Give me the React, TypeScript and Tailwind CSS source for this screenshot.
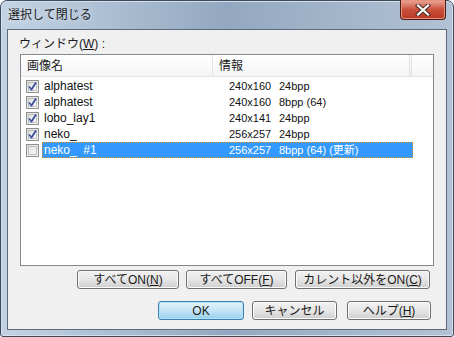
import React from "react";

const font = { fontFamily: '"Liberation Sans", "Noto Sans CJK JP", sans-serif' };

function Check({ checked }: { checked: boolean }) {
  return (
    <div className="w-[13px] h-[13px] border border-[#8e8f8f] bg-gradient-to-br from-[#dcdcdc] to-[#fbfbfb] flex items-center justify-center shrink-0">
      <div className="w-[9px] h-[9px] border border-[#c0c0c0] bg-gradient-to-br from-[#e2e2e2] to-[#f8f8f8] relative">
        {checked && (
          <svg width="11" height="11" viewBox="0 0 11 11" className="absolute left-[-2px] top-[-2px]">
            <path d="M2 5.5 L4.5 8.5 L9 1.5" fill="none" stroke="#3b4fa3" strokeWidth="1.8" strokeLinejoin="round" />
          </svg>
        )}
      </div>
    </div>
  );
}

function Btn({ w, children, def }: { w: string; children: React.ReactNode; def?: boolean }) {
  return (
    <div
      className={
        "h-[19px] rounded-[3px] border flex items-center justify-center text-[12px] leading-none text-[#1a1a1a] " +
        w +
        (def
          ? " border-[#3c7fb1] bg-gradient-to-b from-[#e5f4fc] via-[#c4e5f6] to-[#98d1ef] shadow-[inset_0_0_0_1px_#aee3f9]"
          : " border-[#707070] bg-gradient-to-b from-[#f2f2f2] via-[#e6e6e6] to-[#cfcfcf] shadow-[inset_0_0_0_1px_#fcfcfc]")
      }
    >
      {children}
    </div>
  );
}

const rows = [
  { name: "alphatest", size: "240x160", bpp: "24bpp", on: true },
  { name: "alphatest", size: "240x160", bpp: "8bpp (64)", on: true },
  { name: "lobo_lay1", size: "240x141", bpp: "24bpp", on: true },
  { name: "neko_", size: "256x257", bpp: "24bpp", on: true },
  { name: "neko_\u00a0\u00a0#1", size: "256x257", bpp: "8bpp (64)\u00a0(更新)", on: false, sel: true },
];

export default function App() {
  return (
    <div style={font} className="w-[454px] h-[337px] bg-white">
      <div className="w-[454px] h-[337px] rounded-t-[7px] rounded-b-[3px] border border-[#3c4a5c] bg-gradient-to-r from-[#c3d3e4] via-[#93a8c0] to-[#b2c2d4] flex flex-col shadow-[inset_0_0_0_1px_#d4e0ec]">
        <div className="h-[28px] flex items-start shrink-0">
          <div className="pl-[7px] pt-[6px] text-[12px] leading-[16px] text-[#1b1b1b] [text-shadow:0_0_6px_#e8eef5]">選択して閉じる</div>
          <div className="ml-auto mr-[7px] mt-[-1px] w-[46px] h-[20px] rounded-b-[4px] border border-[#4a1c18] border-t-0 bg-gradient-to-b from-[#e9a99c] via-[#c9503b] to-[#b93821] shadow-[inset_0_0_0_1px_#e9937f] flex items-center justify-center">
            <svg width="18" height="12" viewBox="0 0 18 12">
              <path d="M4 1.5 L14 10.5 M14 1.5 L4 10.5" stroke="#4b2a26" strokeWidth="4.2" strokeLinecap="square" />
              <path d="M4 1.5 L14 10.5 M14 1.5 L4 10.5" stroke="#ffffff" strokeWidth="2.2" strokeLinecap="square" />
            </svg>
          </div>
        </div>
        <div className="flex-1 mx-[6px] mb-[6px] border border-[#5d6a7b] bg-[#f0f0f0] flex flex-col">
          <div className="pl-[11px] mt-[6px] text-[12px] leading-[16px] text-[#1a1a1a]">
            ウィンドウ(<span className="underline">W</span>) :
          </div>
          <div className="ml-[12px] mt-[2px] w-[414px] h-[212px] border border-[#828790] bg-white flex flex-col">
            <div className="h-[22px] flex border-b border-[#e2e3e5] bg-gradient-to-b from-white to-[#f4f5f7] text-[12px] text-[#1a1a1a] shrink-0">
              <div className="w-[192px] pl-[6px] flex items-center border-r border-[#e3e4e6]">画像名</div>
              <div className="w-[199px] pl-[6px] flex items-center border-r-[3px] border-double border-[#dfe0e2]">情報</div>
              <div className="flex-1" />
            </div>
            <div className="pt-[1px] flex flex-col">
              {rows.map((r, i) => (
                <div key={i} className="h-[16px] flex items-center pl-[5px] text-[12px] leading-[16px]">
                  <Check checked={r.on} />
                  <div
                    className={
                      "ml-[3px] w-[371px] h-[16px] flex " +
                      (r.sel ? "bg-[#3399ff] text-white border border-dotted border-[#d98a2b]" : "text-[#111]")
                    }
                  >
                    <div className={"w-[185px] whitespace-pre " + (r.sel ? "pl-[1px] leading-[14px]" : "pl-[2px]")}>{r.name}</div>
                    <div className={"flex whitespace-pre text-[11px] " + (r.sel ? "pl-[1px] leading-[14px]" : "pl-[2px]")}>
                      <div className="w-[50px] shrink-0">{r.size}</div>
                      <div>{r.bpp}</div>
                    </div>
                  </div>
                </div>
              ))}
            </div>
          </div>
          <div className="mt-[4px] flex">
            <div className="ml-[69px]"><Btn w="w-[102px]">すべてON(<span className="underline">N</span>)</Btn></div>
            <div className="ml-[7px]"><Btn w="w-[101px]">すべてOFF(<span className="underline">F</span>)</Btn></div>
            <div className="ml-[8px]"><Btn w="w-[135px]">カレント以外をON(<span className="underline">C</span>)</Btn></div>
          </div>
          <div className="mt-[12px] flex">
            <div className="ml-[150px]"><Btn w="w-[86px]" def>OK</Btn></div>
            <div className="ml-[8px]"><Btn w="w-[85px]">キャンセル</Btn></div>
            <div className="ml-[10px]"><Btn w="w-[84px]">ヘルプ(<span className="underline">H</span>)</Btn></div>
          </div>
        </div>
      </div>
    </div>
  );
}
